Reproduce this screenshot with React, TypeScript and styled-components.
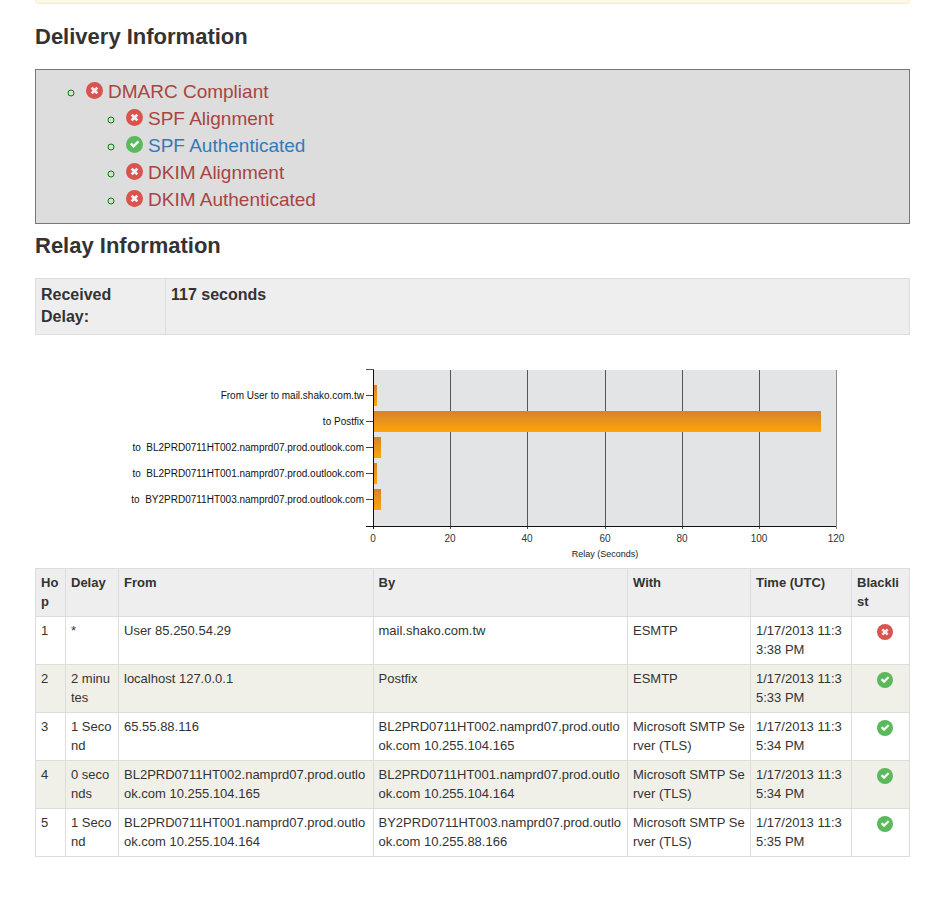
import React from "react";
import styled, { createGlobalStyle } from "styled-components";

const GlobalStyle = createGlobalStyle`
  *, *::before, *::after { box-sizing: border-box; }
  body {
    margin: 0;
    background: #fff;
    color: #333;
    font-family: "Liberation Sans", Arial, Helvetica, sans-serif;
    font-size: 13px;
    line-height: 19px;
  }
`;

const Page = styled.main`
  padding: 0 27px 40px 35px;
`;

const Notice = styled.div`
  height: 4px;
  background: #fcf8e3;
  border: 1px solid #faebcc;
  border-top: 0;
  border-radius: 0 0 4px 4px;
`;

const Heading = styled.h2<{ $top: number }>`
  margin: ${(p) => p.$top}px 0 20px;
  font-size: 22px;
  line-height: 25px;
  font-weight: 700;
`;

const Panel = styled.section`
  padding: 8px 10px 10px;
  background: #ddd;
  border: 1px solid #777;
`;

const CheckList = styled.ul`
  margin: 0;
  padding-left: 40px;
  list-style: circle;
  color: #008000;
  font-size: 19px;
  line-height: 27px;
`;

const CheckLink = styled.a<{ $pass: boolean }>`
  color: ${(p) => (p.$pass ? "#337ab7" : "#a94442")};
  text-decoration: none;

  svg {
    margin-right: 5px;
    vertical-align: -1px;
  }
`;

const Icon = styled.svg`
  display: inline-block;
`;

const DelayTable = styled.table`
  width: 100%;
  table-layout: fixed;
  border-collapse: collapse;
  background: #eee;
  font-size: 16px;
  line-height: 22px;
`;

const DelayCell = styled.th<{ $label?: boolean }>`
  width: ${(p) => (p.$label ? "130px" : "auto")};
  padding: 5px 5px 6px;
  border: 1px solid #ddd;
  text-align: left;
  vertical-align: top;
`;

const Chart = styled.svg`
  display: block;
  width: 100%;
  height: auto;
  font-size: 10px;
`;

const HopTable = styled.table`
  width: 100%;
  table-layout: fixed;
  border-collapse: collapse;
  word-break: break-all;
`;

const HopHead = styled.th<{ $width?: number }>`
  width: ${(p) => (p.$width ? `${p.$width}px` : "auto")};
  padding: 4px 5px 5px;
  background: #eee;
  border: 1px solid #ddd;
  text-align: left;
  vertical-align: top;
`;

const HopRow = styled.tr`
  &:nth-child(even) { background: #f0f0e8; }
`;

const HopCell = styled.td`
  padding: 4px 5px 5px;
  border: 1px solid #ddd;
  vertical-align: top;
`;

const StatusCell = styled(HopCell)`
  padding: 7px 5px 0 14px;
  text-align: center;

  svg { display: inline-block; vertical-align: top; }
`;

function StatusIcon({ pass, size }: { pass: boolean; size: number }) {
  return (
    <Icon width={size} height={size} viewBox="0 0 16 16" role="img" aria-label={pass ? "Passed" : "Failed"}>
      <circle cx="8" cy="8" r="8" fill={pass ? "#5cb85c" : "#d9534f"} />
      {pass ? (
        <path d="M3.7 7.9 5.3 6.2 7.1 8 10.9 4.2 12.5 5.8 7.1 11.3z" fill="#fff" opacity="0.92" />
      ) : (
        <path
          d="M6.2 4.4 8 6.2 9.8 4.4 11.6 6.2 9.8 8 11.6 9.8 9.8 11.6 8 9.8 6.2 11.6 4.4 9.8 6.2 8 4.4 6.2z"
          fill="#fff"
          opacity="0.9"
        />
      )}
    </Icon>
  );
}

function Check({ pass = false, label }: { pass?: boolean; label: string }) {
  return (
    <CheckLink $pass={pass} href="#">
      <StatusIcon pass={pass} size={17} />
      {label}
    </CheckLink>
  );
}

const relays = [
  { label: "From User to mail.shako.com.tw", seconds: 1 },
  { label: "to Postfix", seconds: 116 },
  { label: "to\u00a0 BL2PRD0711HT002.namprd07.prod.outlook.com", seconds: 2 },
  { label: "to\u00a0 BL2PRD0711HT001.namprd07.prod.outlook.com", seconds: 1 },
  { label: "to\u00a0 BY2PRD0711HT003.namprd07.prod.outlook.com", seconds: 2 },
];

const ticks = [0, 20, 40, 60, 80, 100, 120];
const plot = { left: 338, top: 35, width: 463, height: 156, row: 26 };
const xOf = (seconds: number) => plot.left + Math.round((seconds * plot.width) / 120);

function RelayChart() {
  const bottom = plot.top + plot.height;
  return (
    <Chart viewBox="0 0 875 233" role="img" aria-label="Relay delay per hop, in seconds">
      <defs>
        <linearGradient id="bar" x1="0" y1="0" x2="0" y2="1">
          <stop offset="0" stopColor="#d6822f" />
          <stop offset="1" stopColor="#ffa408" />
        </linearGradient>
      </defs>
      <rect x={plot.left} y={plot.top} width={plot.width} height={plot.height} fill="#e3e4e6" />
      {ticks.slice(1).map((t) => (
        <rect key={t} x={xOf(t)} y={plot.top} width="1" height={plot.height + 3} fill={t === 120 ? "#888" : "#555"} />
      ))}
      {relays.map((r, i) => {
        const middle = plot.top + 25 + i * plot.row;
        return (
          <g key={r.label}>
            <rect x={plot.left} y={middle - 10} width={xOf(r.seconds) - plot.left} height="21" fill="url(#bar)" />
            <rect x={plot.left - 7} y={middle} width="7" height="1" fill="#444" />
            <text x={plot.left - 9} y={middle + 4} textAnchor="end" fill="#111">
              {r.label}
            </text>
          </g>
        );
      })}
      <rect x={plot.left - 7} y={plot.top - 1} width="8" height="1" fill="#555" />
      <rect x={plot.left} y={plot.top} width="1" height={plot.height + 3} fill="#111" />
      <rect x={plot.left - 7} y={bottom} width={plot.width + 7} height="1" fill="#111" />
      {ticks.map((t) => (
        <text key={t} x={xOf(t)} y={bottom + 16} textAnchor="middle" fill="#333">
          {t}
        </text>
      ))}
      <text x="570" y={bottom + 31} textAnchor="middle" fontSize="9" fill="#222">
        Relay (Seconds)
      </text>
    </Chart>
  );
}

const hops = [
  { delay: "*", from: "User 85.250.54.29", by: "mail.shako.com.tw", via: "ESMTP", time: "1/17/2013 11:33:38 PM", clean: false },
  { delay: "2 minutes", from: "localhost 127.0.0.1", by: "Postfix", via: "ESMTP", time: "1/17/2013 11:35:33 PM", clean: true },
  { delay: "1 Second", from: "65.55.88.116", by: "BL2PRD0711HT002.namprd07.prod.outlook.com 10.255.104.165", via: "Microsoft SMTP Server (TLS)", time: "1/17/2013 11:35:34 PM", clean: true },
  { delay: "0 seconds", from: "BL2PRD0711HT002.namprd07.prod.outlook.com 10.255.104.165", by: "BL2PRD0711HT001.namprd07.prod.outlook.com 10.255.104.164", via: "Microsoft SMTP Server (TLS)", time: "1/17/2013 11:35:34 PM", clean: true },
  { delay: "1 Second", from: "BL2PRD0711HT001.namprd07.prod.outlook.com 10.255.104.164", by: "BY2PRD0711HT003.namprd07.prod.outlook.com 10.255.88.166", via: "Microsoft SMTP Server (TLS)", time: "1/17/2013 11:35:35 PM", clean: true },
];

export default function App() {
  return (
    <>
      <GlobalStyle />
      <Page>
        <Notice />
        <Heading $top={20}>Delivery Information</Heading>
        <Panel>
          <CheckList>
            <li>
              <Check label="DMARC Compliant" />
              <CheckList>
                <li><Check label="SPF Alignment" /></li>
                <li><Check pass label="SPF Authenticated" /></li>
                <li><Check label="DKIM Alignment" /></li>
                <li><Check label="DKIM Authenticated" /></li>
              </CheckList>
            </li>
          </CheckList>
        </Panel>
        <Heading $top={9}>Relay Information</Heading>
        <DelayTable>
          <tbody>
            <tr>
              <DelayCell $label scope="row">Received<br />Delay:</DelayCell>
              <DelayCell as="td"><strong>117 seconds</strong></DelayCell>
            </tr>
          </tbody>
        </DelayTable>
        <RelayChart />
        <HopTable>
          <thead>
            <tr>
              <HopHead $width={30}>Hop</HopHead>
              <HopHead $width={53}>Delay</HopHead>
              <HopHead>From</HopHead>
              <HopHead>By</HopHead>
              <HopHead $width={123}>With</HopHead>
              <HopHead $width={101}>Time (UTC)</HopHead>
              <HopHead $width={58}>Blacklist</HopHead>
            </tr>
          </thead>
          <tbody>
            {hops.map((h, i) => (
              <HopRow key={i}>
                <HopCell>{i + 1}</HopCell>
                <HopCell>{h.delay}</HopCell>
                <HopCell>{h.from}</HopCell>
                <HopCell>{h.by}</HopCell>
                <HopCell>{h.via}</HopCell>
                <HopCell>{h.time}</HopCell>
                <StatusCell><StatusIcon pass={h.clean} size={16} /></StatusCell>
              </HopRow>
            ))}
          </tbody>
        </HopTable>
      </Page>
    </>
  );
}
